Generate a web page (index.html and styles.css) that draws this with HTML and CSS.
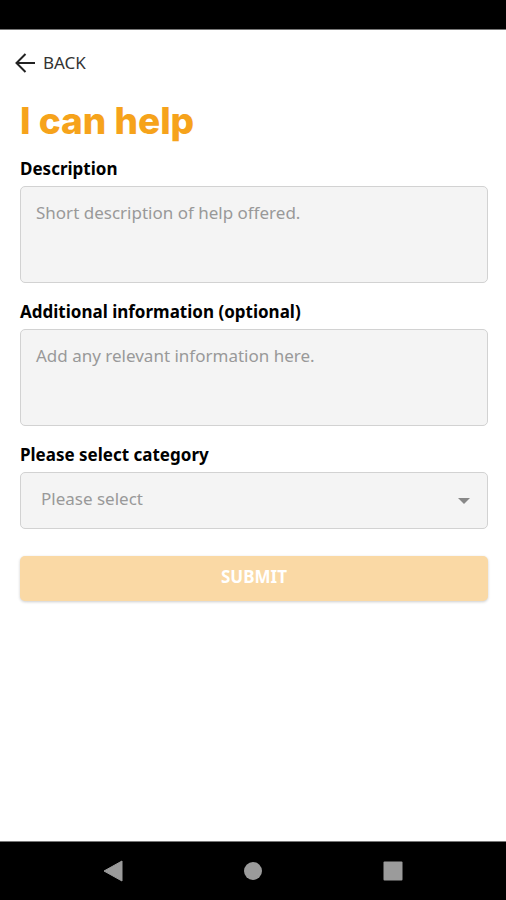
FILE: index.html
```html
<!DOCTYPE html>
<html lang="en">
<head>
    <meta charset="UTF-8">
    <meta name="viewport" content="width=device-width, initial-scale=1.0">
    <title>I can help</title>
    <link rel="stylesheet" href="styles.css">
</head>
<body>
    <div class="status-bar"></div>
    <header>
        <a href="#" class="back">
            <svg width="20" height="20" viewBox="0 0 20 20" fill="none" stroke="#222" stroke-width="2" aria-hidden="true">
                <path d="M20 10H1.5M10.5 1L1.5 10l9 9"/>
            </svg>
            <span>BACK</span>
        </a>
    </header>
    <main>
        <h1>I can help</h1>
        <form id="help-form">
            <label for="description">Description</label>
            <textarea id="description" placeholder="Short description of help offered."></textarea>
            <label for="info">Additional information (optional)</label>
            <textarea id="info" placeholder="Add any relevant information here."></textarea>
            <label for="category">Please select category</label>
            <div class="select-box">
                <select id="category">
                    <option value="">Please select</option>
                </select>
                <svg class="caret" width="12" height="6" viewBox="0 0 12 6" aria-hidden="true">
                    <path d="M0 0h12L6 6z" fill="#888"/>
                </svg>
            </div>
            <button type="submit" class="submit">SUBMIT</button>
        </form>
    </main>
    <nav class="nav-bar">
        <button type="button" aria-label="Back">
            <svg width="20" height="22" viewBox="0 0 20 22"><path d="M19 1v20L1 11z" fill="#9b9b9b" stroke="#9b9b9b" stroke-linejoin="round"/></svg>
        </button>
        <button type="button" aria-label="Home">
            <svg width="20" height="20" viewBox="0 0 20 20"><circle cx="10" cy="10" r="9" fill="#9b9b9b"/></svg>
        </button>
        <button type="button" aria-label="Recent apps">
            <svg width="20" height="20" viewBox="0 0 20 20"><rect x="0.5" y="0.5" width="19" height="19" rx="1" fill="#9b9b9b"/></svg>
        </button>
    </nav>
</body>
</html>
```

FILE: styles.css
```css
* {
    box-sizing: border-box;
}
body {
    margin: 0;
    min-height: 100vh;
    display: flex;
    flex-direction: column;
    background-color: #fff;
    color: #000;
    font-family: "Noto Sans", "Open Sans", sans-serif;
    font-size: 17px;
}
.status-bar {
    height: 30px;
    background-color: #000;
    border-bottom: 1px solid #777;
}
header {
    padding: 21px 15px 0;
}
.back {
    display: inline-flex;
    align-items: center;
    gap: 8px;
    color: #333;
    line-height: 24px;
    text-decoration: none;
}
main {
    flex: 1;
    padding: 19px 18px 20px 20px;
}
h1 {
    margin: 0 0 12px;
    color: #f6a31b;
    font-family: Inter, sans-serif;
    font-size: 37px;
    font-weight: 800;
    line-height: 48px;
}
form {
    display: flex;
    flex-direction: column;
}
label {
    margin-bottom: 5px;
    font-weight: bold;
    line-height: 24px;
}
textarea, select {
    display: block;
    width: 100%;
    border: 1px solid #d2d2d2;
    border-radius: 5px;
    background-color: #f4f4f4;
    color: #999;
    font-family: inherit;
    font-size: 17px;
}
textarea {
    height: 97px;
    margin-bottom: 17px;
    padding: 14px 15px;
    line-height: 24px;
    resize: none;
}
textarea::placeholder {
    color: #999;
}
.select-box {
    position: relative;
    margin-bottom: 27px;
}
select {
    height: 57px;
    padding: 0 40px 4px 20px;
    appearance: none;
}
.caret {
    position: absolute;
    top: 50%;
    right: 18px;
    margin-top: -3px;
    pointer-events: none;
}
.submit {
    height: 45px;
    padding: 0 16px 4px;
    border: none;
    border-radius: 5px;
    background-color: #fad9a5;
    box-shadow: 0 1px 3px rgba(0, 0, 0, 0.2);
    color: #fff;
    font-family: inherit;
    font-size: 17px;
    font-weight: bold;
}
.nav-bar {
    display: flex;
    height: 59px;
    padding: 0 8.5%;
    border-top: 1px solid #777;
    background-color: #000;
}
.nav-bar button {
    flex: 1;
    display: flex;
    align-items: center;
    justify-content: center;
    padding: 0;
    border: none;
    background: none;
}
```
